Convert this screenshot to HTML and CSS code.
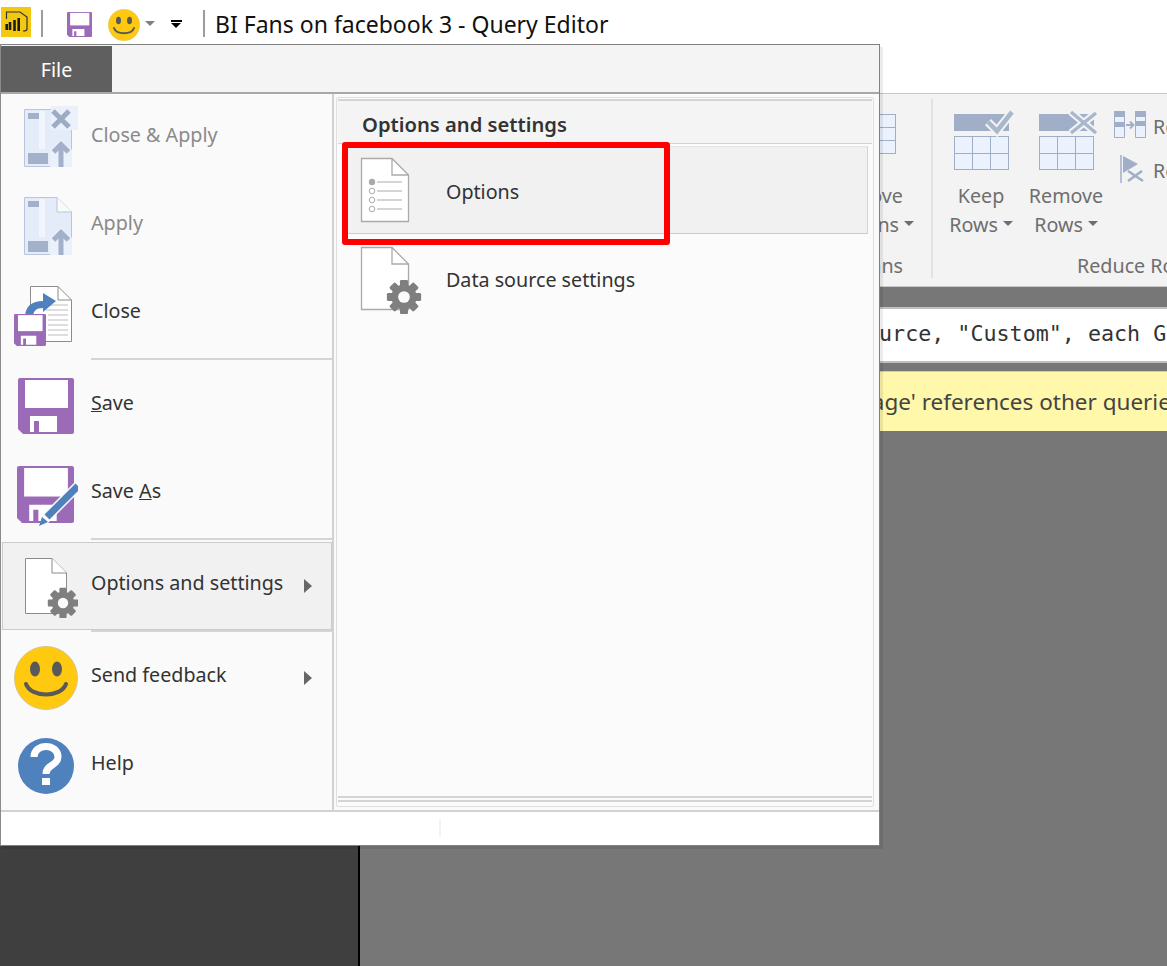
FILE: index.html
```html
<!DOCTYPE html>
<html lang="en">
<head>
<meta charset="utf-8">
<title>BI Fans on facebook 3 - Query Editor</title>
<link rel="stylesheet" href="styles.css">
</head>
<body>
<svg class="defs" width="0" height="0" aria-hidden="true">
  <defs>
    <symbol id="floppy" viewBox="0 0 56 56">
      <path d="M2 0H54a2 2 0 0 1 2 2V54a2 2 0 0 1-2 2H5L0 51V2a2 2 0 0 1 2-2z" fill="#9b6bb7"/>
      <rect x="7" y="2" width="43" height="28" fill="#fff"/>
      <path d="M12 38H39V54H21V43H16V54H12z" fill="#fff"/>
    </symbol>
    <symbol id="gear" viewBox="0 0 40 40">
      <g fill="#7f7f7f">
        <rect x="15.5" y="1" width="9" height="38" rx="1.5"/>
        <rect x="15.5" y="1" width="9" height="38" rx="1.5" transform="rotate(45 20 20)"/>
        <rect x="15.5" y="1" width="9" height="38" rx="1.5" transform="rotate(90 20 20)"/>
        <rect x="15.5" y="1" width="9" height="38" rx="1.5" transform="rotate(135 20 20)"/>
        <circle cx="20" cy="20" r="14"/>
      </g>
      <circle cx="20" cy="20" r="6.5" fill="#fbfbfb"/>
    </symbol>
    <symbol id="smile" viewBox="0 0 64 64">
      <circle cx="32" cy="32" r="31.5" fill="#fec90f" stroke="#d8c48a" stroke-width="1"/>
      <ellipse cx="21" cy="23" rx="5" ry="7.5" fill="#595959"/>
      <ellipse cx="43" cy="23" rx="5" ry="7.5" fill="#595959"/>
      <path d="M12 38C17 52 47 52 52 38" fill="none" stroke="#595959" stroke-width="4" stroke-linecap="round"/>
    </symbol>
    <symbol id="keep-table" viewBox="0 0 56 56">
      <rect x="0.5" y="22.500" width="54" height="33" fill="#ebf2fd" stroke="#a0aec8"/>
      <path d="M0.500 39.500H54.500M18.500 22.500V55.500M36.500 22.500V55.500" stroke="#a0aec8" fill="none"/>
      <rect x="0" y="0" width="55" height="17" fill="#a0aec8"/>
    </symbol>
    <symbol id="page-blue" viewBox="0 0 64 64">
      <path d="M10.500 3.500H43L57.500 18V60.500H10.500z" fill="#e3ecf8" stroke="#b8c5dc"/>
      <rect x="25" y="5" width="6" height="38" fill="#f2f6fc"/>
      <rect x="14" y="7" width="11" height="6" fill="#a2b0c9"/>
      <rect x="14" y="47" width="20" height="11" fill="#a2b0c9"/>
      <path d="M36 61V44L47 33L58 44V61z" fill="#eaf1fb"/>
      <path d="M47 61V39M39.500 46L47 38.500L54.500 46" fill="none" stroke="#a2b0c9" stroke-width="5"/>
    </symbol>
  </defs>
</svg>

<header class="titlebar">
  <svg class="pbi" width="30" height="30" viewBox="0 0 30 30">
    <rect width="30" height="30" fill="#f2c811"/>
    <path d="M5.500 12V5H19L26 10V22C26 23.500 25 24 22 24" fill="none" stroke="#333" stroke-width="1.200"/>
    <path d="M5.700 23V17M9 23V15M13.500 24V13M17.700 24V11" stroke="#1c1c1c" stroke-width="2.600"/>
  </svg>
  <span class="qsep"></span>
  <svg class="qsave" width="25" height="25"><use href="#floppy"/></svg>
  <svg class="qsmile" width="32" height="32"><use href="#smile"/></svg>
  <span class="qcaret"></span>
  <span class="qdrop"></span>
  <span class="qsep qsep-two"></span>
  <h1 class="title">BI Fans on facebook 3 - Query Editor</h1>
</header>

<section class="ribbon">
  <div class="group group-columns">
    <div class="tools tools-end">
      <div class="tool tool-cols">
        <svg class="tool-icon" width="56" height="60" viewBox="0 0 56 60">
          <rect x="0.500" y="4.500" width="54" height="39" fill="#ebf2fd" stroke="#a0aec8"/>
          <path d="M0.500 17.500H54.500M0.500 30.500H54.500M18.500 4.500V43.500M36.500 4.500V43.500" stroke="#a0aec8" fill="none"/>
        </svg>
        <span class="tool-label">Remove</span>
        <span class="tool-label">Columns<i class="caret"></i></span>
      </div>
    </div>
    <div class="group-label group-label-end">Manage Columns</div>
  </div>
  <div class="group group-rows">
    <div class="tools">
      <div class="tool tool-keep">
        <svg class="tool-icon" width="60" height="60" viewBox="0 0 60 60">
          <use href="#keep-table" x="0" y="4" width="56" height="56"/>
          <path d="M34 12L43 21L58 2" fill="none" stroke="#f3f3f3" stroke-width="8.500"/>
          <path d="M34 12L43 21L58 2" fill="none" stroke="#a9b7ce" stroke-width="4.500"/>
        </svg>
        <span class="tool-label">Keep</span>
        <span class="tool-label">Rows<i class="caret"></i></span>
      </div>
      <div class="tool tool-remove">
        <svg class="tool-icon" width="60" height="60" viewBox="0 0 60 60">
          <use href="#keep-table" x="0" y="4" width="56" height="56"/>
          <path d="M32 2L57 23M32 23L57 3" fill="none" stroke="#f3f3f3" stroke-width="7.500"/>
          <path d="M32 2L57 23M32 23L57 3" fill="none" stroke="#a9b7ce" stroke-width="3.500"/>
        </svg>
        <span class="tool-label">Remove</span>
        <span class="tool-label">Rows<i class="caret"></i></span>
      </div>
      <div class="tool-stack">
        <div class="small-tool">
          <svg width="32" height="28" viewBox="0 0 32 28">
            <path d="M0.500 0.500H10.500V26.500H0.500zM21.500 0.500H31.500V26.500H21.500z" fill="#ebf2fd" stroke="#a0aec8"/>
            <path d="M0 0H11V6H0zM21 0H32V6H21zM1 11H10V16H1zM22 10H31V15H22z" fill="#a0aec8"/>
            <path d="M12 14H19M16 10.500L19.500 14L16 17.500" fill="none" stroke="#a0aec8" stroke-width="1.800"/>
          </svg>
          <span class="small-label">Remove Duplicates</span>
        </div>
        <div class="small-tool">
          <svg width="32" height="30" viewBox="0 0 32 30">
            <path d="M7 1V29" stroke="#a0aec8" stroke-width="1.500"/>
            <path d="M9 2L24 10L9 19z" fill="#a0aec8"/>
            <path d="M14 17L29 27M14 27L28 17" stroke="#a0aec8" stroke-width="2.500"/>
          </svg>
          <span class="small-label">Remove Errors</span>
        </div>
      </div>
    </div>
    <div class="group-label">Reduce Rows</div>
  </div>
</section>

<main class="workspace">
  <aside class="queries"></aside>
  <div class="editor">
    <div class="formula"><code class="formula-text">Table.AddColumn(Source, "Custom", each GetData</code></div>
    <div class="warning"><span class="warning-text">Formula.Firewall: Query 'Page' references other queries</span></div>
  </div>
</main>

<div class="menu">
  <div class="menu-tabs"><div class="file-tab">File</div></div>
  <div class="menu-body">
    <nav class="menu-list">
      <div class="item item-off">
        <svg class="item-icon" width="64" height="64" viewBox="0 0 64 64">
          <use href="#page-blue" width="64" height="64"/>
          <path d="M37 0H64V24H37z" fill="#eaf1fb"/>
          <path d="M39 5L55 21M55 5L39 21" stroke="#9dabc5" stroke-width="5"/>
        </svg>
        <span class="item-label">Close &amp; Apply</span>
      </div>
      <div class="item item-off">
        <svg class="item-icon" width="64" height="64"><use href="#page-blue" width="64" height="64"/>
          <path d="M43 3.500V18H57.500" fill="#fafafa" stroke="#b8c5dc"/>
        </svg>
        <span class="item-label">Apply</span>
      </div>
      <div class="item">
        <svg class="item-icon" width="64" height="64" viewBox="0 0 64 64">
          <path d="M16.500 4.500H44L57.500 18V59.500H16.500z" fill="#fff" stroke="#8c8c8c"/>
          <path d="M44 4.500V18H57.500" fill="none" stroke="#8c8c8c"/>
          <path d="M32 23H54M32 28H54M34 33H54M34 38H54M34 43H54M34 48H54M34 53H54" stroke="#bdbdbd" stroke-width="1"/>
          <path d="M11 36C11 24 18 19 29 19V11L42 19L29 30V26C22 26 19 29 19 36z" fill="#4f81bd"/>
          <use href="#floppy" x="0" y="32" width="32" height="32"/>
        </svg>
        <span class="item-label">Close</span>
      </div>
      <div class="sep"></div>
      <div class="item">
        <svg class="item-icon" width="64" height="64" viewBox="0 0 64 64"><use href="#floppy" x="4" y="4" width="56" height="56"/></svg>
        <span class="item-label"><u>S</u>ave</span>
      </div>
      <div class="item">
        <svg class="item-icon" width="64" height="64" viewBox="0 0 64 64">
          <use href="#floppy" x="3" y="4" width="57" height="57"/>
          <path d="M64 24L29 59" stroke="#fafafa" stroke-width="10"/>
          <path d="M64 24L33 55" stroke="#4f81bd" stroke-width="7"/>
          <path d="M25 64L28 55L34 60z" fill="#4f81bd"/>
        </svg>
        <span class="item-label">Save <u>A</u>s</span>
      </div>
      <div class="sep"></div>
      <div class="item item-active">
        <svg class="item-icon" width="64" height="64" viewBox="0 0 64 64">
          <path d="M11.500 4.500H38L52.500 19V59.500H11.500z" fill="#fff" stroke="#8c8c8c"/>
          <path d="M38 4.500V19H52.500" fill="#fff" stroke="#8c8c8c"/>
          <use href="#gear" x="33" y="33" width="32" height="32"/>
        </svg>
        <span class="item-label">Options and settings</span>
        <i class="arrow"></i>
      </div>
      <div class="sep"></div>
      <div class="item">
        <svg class="item-icon" width="64" height="64"><use href="#smile" width="64" height="64"/></svg>
        <span class="item-label">Send feedback</span>
        <i class="arrow"></i>
      </div>
      <div class="item">
        <svg class="item-icon" width="64" height="64" viewBox="0 0 64 64">
          <circle cx="32" cy="32" r="28" fill="#4f81bd"/>
          <path d="M20 23C20 9 44 9 44 23C44 32 32 30 32 40" fill="none" stroke="#fff" stroke-width="7"/>
          <rect x="28" y="44" width="8" height="7" fill="#fff"/>
        </svg>
        <span class="item-label">Help</span>
      </div>
    </nav>
    <section class="panel">
      <h2 class="panel-head">Options and settings</h2>
      <div class="panel-row panel-row-active">
        <svg class="panel-icon" width="64" height="72" viewBox="0 0 64 72">
          <path d="M1.500 4.500H32L48.500 21V67.500H1.500z" fill="#fff" stroke="#aaa" stroke-width="1.300"/>
          <path d="M32 4.500V21H48.500" fill="none" stroke="#aaa" stroke-width="1.300"/>
          <circle cx="12" cy="28" r="3.200" fill="#aaa"/>
          <circle cx="12" cy="37" r="2.800" fill="#fff" stroke="#aaa"/>
          <circle cx="12" cy="46" r="2.800" fill="#fff" stroke="#aaa"/>
          <circle cx="12" cy="55" r="2.800" fill="#fff" stroke="#aaa"/>
          <path d="M17 28H42M17 37H42M17 46H42M17 55H42" stroke="#aaa"/>
        </svg>
        <span class="panel-label">Options</span>
      </div>
      <div class="panel-row">
        <svg class="panel-icon" width="64" height="72" viewBox="0 0 64 72">
          <path d="M1.500 5.500H32L48.500 22V67.500H1.500z" fill="#fff" stroke="#aaa" stroke-width="1.300"/>
          <path d="M32 5.500V22H48.500" fill="none" stroke="#aaa" stroke-width="1.300"/>
          <use href="#gear" x="26" y="37" width="36" height="36"/>
        </svg>
        <span class="panel-label">Data source settings</span>
      </div>
      <div class="panel-foot"></div>
    </section>
  </div>
  <footer class="menu-foot"><span class="foot-sep"></span></footer>
  <div class="highlight"></div>
</div>
</body>
</html>
```

FILE: styles.css
```css
* { box-sizing: border-box; }
html, body { margin: 0; padding: 0; }
body {
  position: relative;
  width: 1167px;
  height: 966px;
  overflow: hidden;
  background: #fff;
  display: flex;
  flex-direction: column;
  font-family: "Noto Sans", "Open Sans", sans-serif;
  font-size: 19.7px;
  color: #333;
}
.defs { position: absolute; }
svg { display: block; flex: none; }

/* Title bar */
.titlebar {
  height: 44px;
  flex: none;
  display: flex;
  align-items: flex-start;
}
.pbi { margin: 7px 0 0 1px; }
.qsep { width: 2px; height: 27px; margin: 10px 0 0 10px; background: #9c9c9c; }
.qsave { margin: 12px 0 0 24px; }
.qsmile { margin: 9px 0 0 16px; }
.qcaret {
  width: 0; height: 0; margin: 21px 0 0 5px;
  border-left: 5px solid transparent;
  border-right: 5px solid transparent;
  border-top: 5px solid #808080;
}
.qdrop {
  width: 11px; height: 8px; margin: 20px 0 0 16px;
  background: linear-gradient(#000 0 2px, transparent 2px);
  position: relative;
}
.qdrop::after {
  content: "";
  position: absolute; left: 0; top: 3px;
  border-left: 5.5px solid transparent;
  border-right: 5.5px solid transparent;
  border-top: 5px solid #000;
}
.qsep-two { margin-left: 21px; }
.title {
  margin: 7px 0 0 10px;
  font-size: 23px;
  font-weight: 400;
  line-height: 34px;
  color: #111;
  white-space: nowrap;
}

/* Ribbon behind the menu */
.ribbon {
  margin-top: 49px;
  height: 194px;
  flex: none;
  display: flex;
  background: #f3f3f3;
  border-top: 1px solid #c8c8c8;
  border-bottom: 1px solid #c8c8c8;
  padding-left: 700px;
  color: #6e6e6e;
  white-space: nowrap;
}
.group { display: flex; flex-direction: column; flex: none; }
.group-columns { width: 233px; position: relative; }
.group-columns::after {
  content: "";
  position: absolute; right: 0; top: 5px; bottom: 8px;
  width: 2px; background: #e2e2e2;
}
.group-rows { width: 410px; }
.tools { height: 158px; padding-top: 16px; display: flex; }
.tools-end { justify-content: flex-end; padding-right: 19px; }
.tool { display: flex; flex-direction: column; align-items: center; flex: none; }
.tool-icon { margin-bottom: 11px; }
.tool-label { line-height: 29px; }
.tool-keep { width: 72px; margin-left: 12px; }
.tool-remove { width: 84px; margin-left: 7px; }
.tool-cols .tool-icon, .tool-keep .tool-icon, .tool-remove .tool-icon { transform: translateX(3px); }
.caret {
  display: inline-block;
  margin: 0 0 6px 5px;
  border-left: 5.5px solid transparent;
  border-right: 5.5px solid transparent;
  border-top: 5px solid #6e6e6e;
}
.tool-stack { margin-left: 6px; display: flex; flex-direction: column; gap: 14px; }
.small-tool { height: 30px; display: flex; align-items: center; gap: 7px; }
.small-label { height: 30px; padding-top: 4px; line-height: 26px; }
.group-label { line-height: 28px; text-align: center; }
.group-label-end { text-align: right; padding-right: 30px; }

/* Workspace behind the menu */
.workspace { flex: 1; display: flex; min-height: 0; }
.queries { width: 360px; flex: none; background: #3f3f3f; border-right: 2px solid #000; }
.editor { flex: 1; min-width: 0; background: #777; padding-top: 20px; overflow: hidden; }
.formula {
  height: 56px;
  background: #fff;
  border-top: 2px solid #c0c0c0;
  border-bottom: 2px solid #c0c0c0;
  padding-bottom: 4px;
  display: flex;
  align-items: center;
  white-space: nowrap;
}
.formula-text {
  margin-left: 284px;
  font-family: "DejaVu Sans Mono", "Liberation Mono", monospace;
  font-size: 21.7px;
  color: #333;
}
.warning {
  height: 60px;
  margin-top: 8px;
  background: #fff7aa;
  border-top: 1px solid #d8cf88;
  display: flex;
  align-items: center;
  white-space: nowrap;
}
.warning-text { margin-left: 236px; font-size: 22.5px; color: #444; }

/* File menu */
.menu {
  position: absolute;
  left: 0; top: 44px;
  width: 880px; height: 802px;
  display: flex;
  flex-direction: column;
  background: #fff;
  border: 1px solid #808080;
  border-left-color: #8a8a8a;
  box-shadow: 3px 3px 0 rgba(0, 0, 0, 0.08);
  color: #333;
}
.menu-tabs {
  height: 49px;
  flex: none;
  background: #f4f4f4;
  border-bottom: 2px solid #a8a8a8;
  padding-top: 1px;
}
.file-tab {
  width: 111px; height: 46px;
  background: #5f5f5f;
  color: #fff;
  text-align: center;
  line-height: 48px;
}
.menu-body {
  height: 718px;
  flex: none;
  display: flex;
  background: #fafafa;
  border-bottom: 2px solid #d2d2d2;
}
.menu-list {
  width: 333px;
  flex: none;
  border-right: 2px solid #d2d2d2;
  padding-left: 1px;
}
.item {
  height: 88px;
  width: 330px;
  display: flex;
  align-items: center;
  gap: 13px;
  padding-left: 11px;
  border: 1px solid transparent;
}
.item-off { color: #8a8a8a; }
.item-active { background: #f1f1f1; border-color: #cbcbcb; }
.item-label { padding-bottom: 8px; white-space: nowrap; }
.arrow {
  margin-left: auto;
  margin-right: 19px;
  border-left: 8px solid #666;
  border-top: 7px solid transparent;
  border-bottom: 7px solid transparent;
}
.sep { height: 2px; margin: 0 0 2px 89px; background: #d4d4d4; }

/* Submenu panel */
.panel {
  flex: 1;
  margin: 3px 5px 3px 2px;
  padding: 1px;
  display: flex;
  flex-direction: column;
  background: #fbfbfb;
  border: 1px solid #dedede;
  border-radius: 2px;
  min-width: 0;
}
.panel-head {
  margin: 0;
  height: 45px;
  padding: 4px 0 0 24px;
  background: #f4f4f4;
  border-top: 2px solid #d4d4d4;
  border-bottom: 1px solid #d2d2d2;
  font-size: 20.2px;
  font-weight: 600;
  line-height: 38px;
  color: #333;
}
.panel-row {
  height: 88px;
  margin: 0 4px;
  flex: none;
  display: flex;
  align-items: center;
  gap: 22px;
  padding-left: 17px;
  border: 1px solid transparent;
}
.panel-row-active { margin-top: 2px; background: #f1f1f1; border-color: #e4e4e4 #d4d4d4 #cbcbcb #e4e4e4; }
.panel-label { padding-top: 2px; white-space: nowrap; }
.panel-foot {
  margin-top: auto;
  margin-bottom: 3px;
  height: 6px;
  flex: none;
  border-top: 2px solid #d4d4d4;
  border-bottom: 2px solid #d4d4d4;
}
.menu-foot { flex: 1; background: #fff; position: relative; display: flex; padding: 8px 0 0 438px; }
.foot-sep { width: 2px; height: 16px; background: #f3f3f3; }
.highlight {
  position: absolute;
  left: 341px; top: 97px;
  width: 328px; height: 103px;
  border: 6px solid #fe0000;
  border-radius: 3px;
}
```
